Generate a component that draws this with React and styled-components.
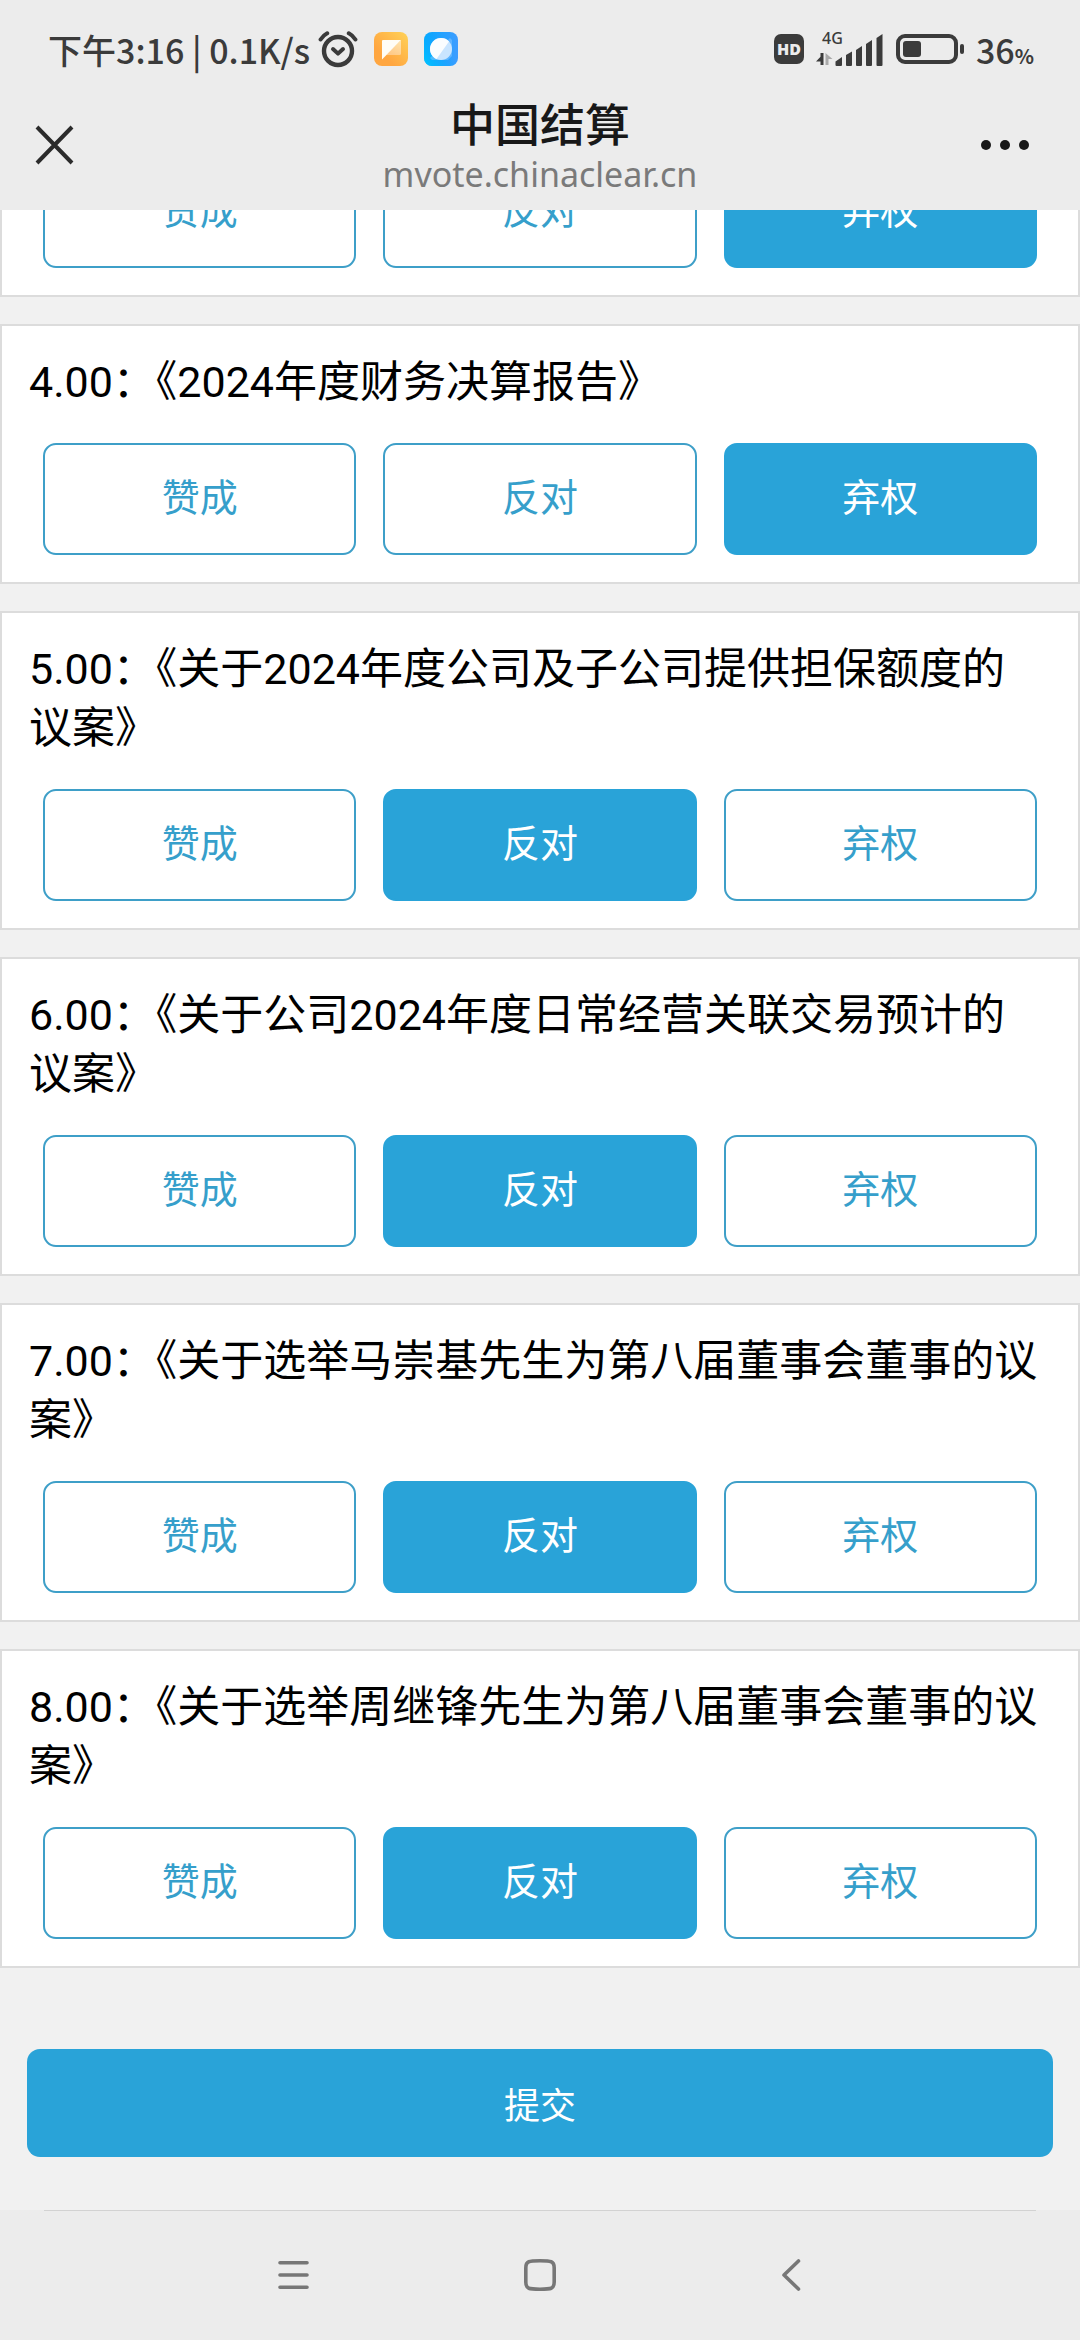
import React, { useState } from "react";
import styled, { createGlobalStyle } from "styled-components";

const GlobalStyle = createGlobalStyle`
  * {
    box-sizing: border-box;
  }
  body {
    margin: 0;
    background: #f1f1f1;
    font-family: Roboto, "Noto Sans CJK SC", sans-serif;
  }
  button {
    margin: 0;
    padding: 0;
    border: none;
    background: none;
    font-family: inherit;
    cursor: pointer;
  }
  svg {
    display: block;
    flex: none;
  }
`;

const Page = styled.div`
  display: flex;
  flex-direction: column;
  height: 100vh;
`;

const Header = styled.header`
  flex: none;
  background: #ececec;
`;

const StatusBar = styled.div`
  display: flex;
  align-items: center;
  justify-content: space-between;
  height: 98px;
  padding: 0 46px 0 48px;
  color: #3b3b3b;
  font-family: "Noto Sans CJK SC", sans-serif;
  font-size: 34px;
  font-weight: 500;
`;

const StatusGroup = styled.div`
  display: flex;
  align-items: center;
  gap: ${(props) => props.$gap}px;
`;

const HdBadge = styled.span`
  display: flex;
  align-items: center;
  justify-content: center;
  width: 30px;
  height: 30px;
  border-radius: 7px;
  background: #3b3b3b;
  color: #ececec;
  font-family: "Open Sans", sans-serif;
  font-size: 16px;
  font-weight: 800;
  line-height: 30px;
`;

const Percent = styled.small`
  font-size: 20px;
  font-weight: 700;
`;

const TitleBar = styled.div`
  display: flex;
  align-items: center;
  justify-content: space-between;
  height: 112px;
  padding: 0 32px 14px;
`;

const IconButton = styled.button`
  display: flex;
  align-items: center;
  justify-content: ${(props) => props.$align};
  width: 72px;
  height: 60px;
`;

const Heading = styled.div`
  text-align: center;
  font-family: "Noto Sans CJK SC", sans-serif;
`;

const Title = styled.h1`
  margin: 0;
  color: #181818;
  font-size: 45px;
  font-weight: 500;
  line-height: 54px;
`;

const Domain = styled.p`
  margin: 0;
  color: #7a7a7a;
  font-family: "Noto Sans", sans-serif;
  font-size: 34px;
  line-height: 48px;
`;

// column-reverse keeps the list scrolled to the submit button on load
const Scroller = styled.main`
  display: flex;
  flex: 1;
  flex-direction: column-reverse;
  min-height: 0;
  overflow-y: auto;
  scrollbar-width: none;
`;

const Content = styled.div`
  flex: none;
`;

const Cards = styled.div`
  display: flex;
  flex-direction: column;
  gap: 27px;
`;

const Card = styled.section`
  padding: 27px 0;
  border: 2px solid #dcdcdc;
  background: #fff;
`;

const CardTitle = styled.h2`
  margin: 0 0 31px;
  padding: 0 36px 0 27px;
  color: #000;
  font-size: 43px;
  font-weight: 400;
  line-height: 59px;
`;

const Options = styled.div`
  display: grid;
  grid-template-columns: repeat(3, 1fr);
  gap: 27px;
  padding: 0 41px;
`;

const Option = styled.button`
  height: 112px;
  padding-bottom: 10px;
  border: 2px solid ${(props) => (props.$active ? "#29a3d8" : "#3e9fc8")};
  border-radius: 13px;
  background: ${(props) => (props.$active ? "#29a3d8" : "#fff")};
  color: ${(props) => (props.$active ? "#fff" : "#369fcb")};
  font-size: 38px;
`;

const Footer = styled.div`
  padding: 81px 27px 53px;
`;

const Submit = styled.button`
  width: 100%;
  height: 108px;
  border-radius: 13px;
  background: #29a3d8;
  color: #fff;
  font-size: 36px;
`;

const NavBar = styled.nav`
  flex: none;
  height: 130px;
  background: #ececec;
`;

const Divider = styled.hr`
  height: 1px;
  margin: 0 44px;
  border: none;
  background: #d2d2d2;
`;

const NavButtons = styled.div`
  display: flex;
  align-items: center;
  justify-content: center;
  gap: 215px;
  height: 128px;
`;

const AlarmIcon = () => (
  <svg width="40" height="38" viewBox="0 0 40 38" fill="none" stroke="#3b3b3b">
    <circle cx="20" cy="21" r="14" strokeWidth="4.4" />
    <path d="M15 19l5 4.600 5-4.600" strokeWidth="4" strokeLinecap="round" strokeLinejoin="round" />
    <path d="M2.600 9.500Q5 5.500 9.200 3.300M37.400 9.500Q35 5.500 30.800 3.300" strokeWidth="4" strokeLinecap="round" />
  </svg>
);

const NoteIcon = () => (
  <svg width="34" height="34" viewBox="0 0 34 34">
    <defs>
      <linearGradient id="note" x1="1" y1="0" x2="0.300" y2="0.700">
        <stop offset="0" stopColor="#ffd257" />
        <stop offset="1" stopColor="#ffa640" />
      </linearGradient>
      <linearGradient id="fold" x1="1" y1="0" x2="0.500" y2="1">
        <stop offset="0" stopColor="#ffe6b0" />
        <stop offset="1" stopColor="#ffca88" />
      </linearGradient>
    </defs>
    <rect width="34" height="34" rx="8" fill="url(#note)" />
    <path d="M27 8v13.500a1.500 1.500 0 0 1-1.500 1.500H12z" fill="url(#fold)" />
    <path d="M8 9a1 1 0 0 1 1-1h18L8 27.500z" fill="#fffdf6" />
  </svg>
);

const BubbleIcon = () => (
  <svg width="34" height="34" viewBox="0 0 34 34">
    <defs>
      <linearGradient id="bubble" x1="0" y1="0" x2="1" y2="0">
        <stop offset="0" stopColor="#06a8ff" />
        <stop offset="1" stopColor="#3d9cff" />
      </linearGradient>
      <linearGradient id="glow" x1="0" y1="1" x2="0.700" y2="0.500">
        <stop offset="0" stopColor="#00c8ff" />
        <stop offset="1" stopColor="#0a9dff" stopOpacity="0" />
      </linearGradient>
    </defs>
    <rect width="34" height="34" rx="8" fill="url(#bubble)" />
    <rect width="34" height="34" rx="8" fill="url(#glow)" />
    <path d="M26 6l2 2v16l-4 4H8l-2-2z" fill="#8cc8ff" opacity="0.500" />
    <circle cx="17" cy="17" r="11" fill="#c9e5ff" />
    <path d="M25 9.400A11 11 0 1 0 9.200 24.800Q11 26.500 12.500 27z" fill="#fafdff" />
  </svg>
);

const SignalIcon = () => (
  <svg width="68" height="50" viewBox="0 -8 68 50" fill="#3b3b3b">
    <text x="6" y="12" fontFamily="Noto Sans" fontSize="16" fontWeight="500">
      4G
    </text>
    <path d="M4.500 21h3v12h-3v-3.500h-4.500l4.500-4.700z" />
    <path d="M9.500 33h3v-6h4l-7-6z" fill="#a9a9a9" />
    <path d="M19.500 29.500l6.500-4.500v8a1 1 0 0 1-1 1h-4.500a1 1 0 0 1-1-1z" />
    <path d="M30 23l6-3.500V33a1 1 0 0 1-1 1H31a1 1 0 0 1-1-1z" />
    <path d="M40 18l6-4V33a1 1 0 0 1-1 1h-4a1 1 0 0 1-1-1z" />
    <path d="M50 12l6-4V33a1 1 0 0 1-1 1h-4a1 1 0 0 1-1-1z" />
    <path d="M60.500 6l6-4V33a1 1 0 0 1-1 1h-4a1 1 0 0 1-1-1z" />
  </svg>
);

const BatteryIcon = () => (
  <svg width="68" height="32" viewBox="0 0 68 32">
    <rect x="2" y="3" width="58" height="26" rx="7" fill="none" stroke="#3b3b3b" strokeWidth="4" />
    <rect x="7" y="8" width="18" height="16" rx="3" fill="#3b3b3b" />
    <rect x="64" y="11" width="4" height="10" rx="2" fill="#3b3b3b" />
  </svg>
);

const options = ["赞成", "反对", "弃权"];

const proposals = [
  { id: "3.00", vote: "弃权" },
  { id: "4.00", title: "4.00：《2024年度财务决算报告》", vote: "弃权" },
  {
    id: "5.00",
    title: "5.00：《关于2024年度公司及子公司提供担保额度的议案》",
    vote: "反对",
  },
  {
    id: "6.00",
    title: "6.00：《关于公司2024年度日常经营关联交易预计的议案》",
    vote: "反对",
  },
  {
    id: "7.00",
    title: "7.00：《关于选举马崇基先生为第八届董事会董事的议案》",
    vote: "反对",
  },
  {
    id: "8.00",
    title: "8.00：《关于选举周继锋先生为第八届董事会董事的议案》",
    vote: "反对",
  },
];

function ProposalCard({ proposal }) {
  const [vote, setVote] = useState(proposal.vote);

  return (
    <Card>
      {proposal.title && <CardTitle>{proposal.title}</CardTitle>}
      <Options>
        {options.map((option) => (
          <Option
            key={option}
            type="button"
            $active={vote === option}
            aria-pressed={vote === option}
            onClick={() => setVote(option)}
          >
            {option}
          </Option>
        ))}
      </Options>
    </Card>
  );
}

export default function App() {
  return (
    <Page lang="zh-CN">
      <GlobalStyle />
      <Header>
        <StatusBar>
          <StatusGroup $gap={16}>
            <StatusGroup $gap={8}>
              <span>下午3:16 | 0.1K/s</span>
              <AlarmIcon />
            </StatusGroup>
            <NoteIcon />
            <BubbleIcon />
          </StatusGroup>
          <StatusGroup $gap={12}>
            <HdBadge>HD</HdBadge>
            <SignalIcon />
            <BatteryIcon />
            <span>
              36<Percent>%</Percent>
            </span>
          </StatusGroup>
        </StatusBar>
        <TitleBar>
          <IconButton type="button" aria-label="关闭" $align="flex-start">
            <svg width="44" height="44" viewBox="0 0 44 44" stroke="#2b2b2b" strokeWidth="4">
              <path d="M5 2l35 36M40 2L5 38" />
            </svg>
          </IconButton>
          <Heading>
            <Title>中国结算</Title>
            <Domain>mvote.chinaclear.cn</Domain>
          </Heading>
          <IconButton type="button" aria-label="更多" $align="flex-end">
            <svg width="68" height="14" viewBox="0 0 68 14" fill="#181818">
              <circle cx="6" cy="5" r="5" />
              <circle cx="25" cy="5" r="5" />
              <circle cx="44" cy="5" r="5" />
            </svg>
          </IconButton>
        </TitleBar>
      </Header>
      <Scroller>
        <Content>
          <Cards>
            {proposals.map((proposal) => (
              <ProposalCard key={proposal.id} proposal={proposal} />
            ))}
          </Cards>
          <Footer>
            <Submit type="submit">提交</Submit>
          </Footer>
        </Content>
      </Scroller>
      <NavBar>
        <Divider />
        <NavButtons>
          <button type="button" aria-label="菜单">
            <svg width="32" height="34" viewBox="0 0 32 34" stroke="#777" strokeWidth="3.600" strokeLinecap="round">
              <path d="M3 4.700h27M3 17h27M3 29.300h27" />
            </svg>
          </button>
          <button type="button" aria-label="主页">
            <svg width="32" height="34" viewBox="0 0 32 34" fill="none" stroke="#777" strokeWidth="3.600">
              <path d="M16 2.800C27 2.800 30.200 3 30.200 10v14C30.200 31 27 31.200 16 31.200S1.800 31 1.800 24V10C1.800 3 5 2.800 16 2.800z" />
            </svg>
          </button>
          <button type="button" aria-label="返回">
            <svg width="32" height="34" viewBox="0 0 32 34" fill="none" stroke="#777" strokeWidth="3.600" strokeLinecap="round" strokeLinejoin="round">
              <path d="M27.500 3L13 17l14.500 14" />
            </svg>
          </button>
        </NavButtons>
      </NavBar>
    </Page>
  );
}
